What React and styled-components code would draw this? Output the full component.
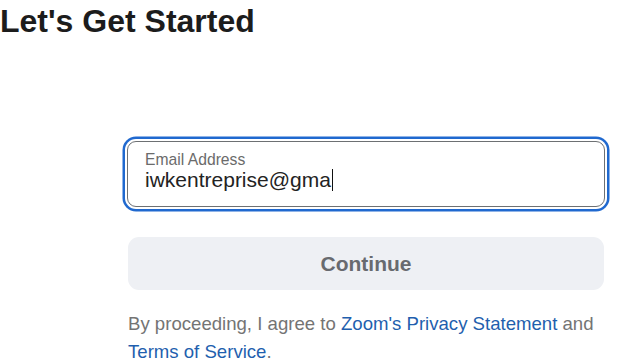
import React from "react";
import styled, { createGlobalStyle } from "styled-components";

const GlobalStyle = createGlobalStyle`
  html, body {
    margin: 0;
    padding: 0;
    background: #ffffff;
    font-family: "Liberation Sans", Arial, sans-serif;
  }
`;

const Page = styled.div`
  width: 640px;
  height: 360px;
  overflow: hidden;
  padding-top: 5px;
  box-sizing: border-box;
  background: #ffffff;
`;

const Title = styled.h1`
  margin: 0;
  font-size: 32px;
  line-height: 1;
  font-weight: 700;
  color: #1c1c1c;
`;

const Form = styled.div`
  margin: 104px 0 0 127px;
  width: 478px;
  display: flex;
  flex-direction: column;
`;

const Field = styled.div`
  position: relative;
  height: 66px;
  box-sizing: border-box;
  border: 1px solid #6d7073;
  border-radius: 9px;
  padding: 10px 17px 0;
  display: flex;
  flex-direction: column;
  box-shadow: 0 0 0 2px #ffffff, 0 0 0 4.5px #2069cf;
  background: #ffffff;
`;

const Label = styled.span`
  font-size: 15.7px;
  line-height: 1;
  color: #6b6b6b;
`;

const Value = styled.div`
  margin-top: 1px;
  font-size: 21px;
  line-height: 1;
  color: #232323;
  display: flex;
  align-items: center;
`;

const Caret = styled.span`
  display: inline-block;
  width: 1.5px;
  height: 22px;
  margin-left: 1px;
  background: #111;
`;

const Button = styled.button`
  margin: 30px 0 0 1px;
  width: 476px;
  height: 53px;
  border: none;
  border-radius: 11px;
  background: #eef0f4;
  color: #686a6f;
  font-family: "Liberation Sans", Arial, sans-serif;
  font-size: 21px;
  font-weight: 700;
  display: flex;
  align-items: center;
  justify-content: center;
  padding: 0;
`;

const Terms = styled.p`
  margin: 20px 0 0 1px;
  width: 476px;
  font-size: 18.6px;
  line-height: 28px;
  color: #747474;
`;

const TermsLink = styled.a`
  color: #1f5fae;
  text-decoration: none;
`;

export default function App() {
  return (
    <>
      <GlobalStyle />
      <Page>
        <Title>Let's Get Started</Title>
        <Form>
          <Field>
            <Label>Email Address</Label>
            <Value>
              iwkentreprise@gma
              <Caret />
            </Value>
          </Field>
          <Button>Continue</Button>
          <Terms>
            By proceeding, I agree to{" "}
            <TermsLink>Zoom's Privacy Statement</TermsLink> and{" "}
            <TermsLink>Terms of Service</TermsLink>.
          </Terms>
        </Form>
      </Page>
    </>
  );
}
